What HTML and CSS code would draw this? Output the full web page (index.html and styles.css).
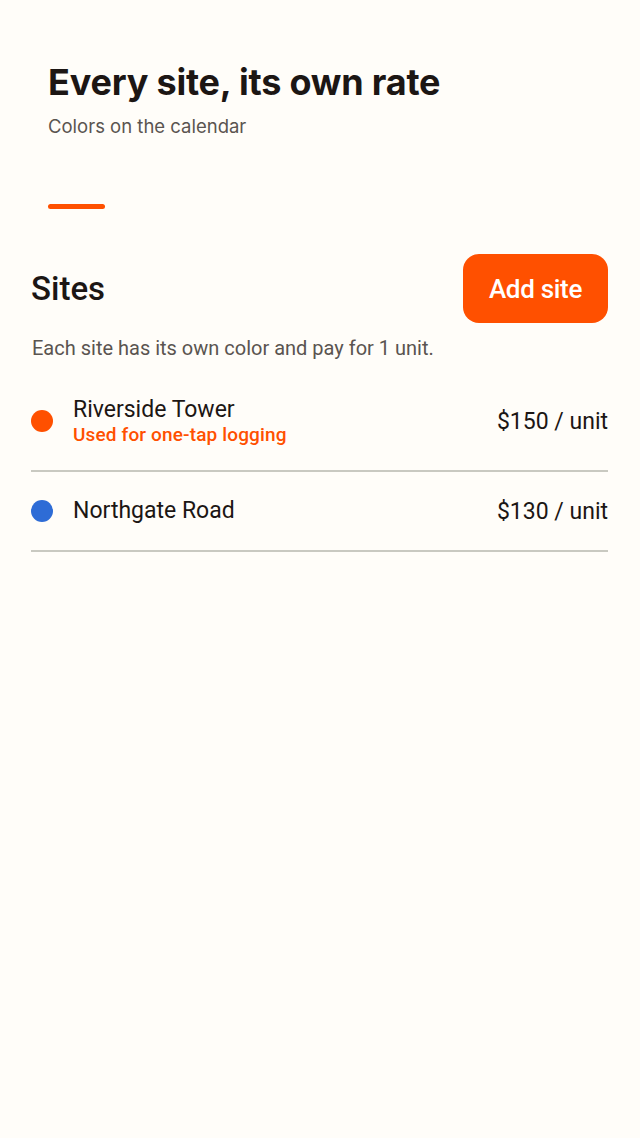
FILE: index.html
```html
<!DOCTYPE html>
<html lang="en">
<head>
    <meta charset="UTF-8">
    <title>Sites</title>
    <link rel="stylesheet" href="styles.css">
</head>
<body>
    <div class="header">
        <h1>Every site, its own rate</h1>
        <p class="subtitle">Colors on the calendar</p>
        <div class="accent"></div>
    </div>

    <div class="sites">
        <div class="sites-top">
            <h2>Sites</h2>
            <button class="add-btn">Add site</button>
        </div>
        <p class="hint">Each site has its own color and pay for 1 unit.</p>

        <ul class="site-list">
            <li class="site">
                <span class="dot orange"></span>
                <div class="site-info">
                    <div class="site-name">Riverside Tower</div>
                    <div class="site-note">Used for one-tap logging</div>
                </div>
                <div class="site-rate">$150 / unit</div>
            </li>
            <li class="site">
                <span class="dot blue"></span>
                <div class="site-info">
                    <div class="site-name">Northgate Road</div>
                </div>
                <div class="site-rate">$130 / unit</div>
            </li>
        </ul>
    </div>
</body>
</html>
```

FILE: styles.css
```css
body {
    margin: 0;
    background: #fffdf9;
    color: #1c1614;
    font-family: Roboto, "Liberation Sans", sans-serif;
}
.header {
    padding: 60px 48px 0 48px;
    font-family: Inter, "Liberation Sans", sans-serif;
}
h1 {
    margin: 0;
    font-size: 36px;
    font-weight: 700;
    letter-spacing: -0.2px;
    line-height: 44px;
}
.subtitle {
    margin: 10px 0 0 0;
    font-size: 18.5px;
    line-height: 24px;
    color: #5a5450;
}
.accent {
    width: 57px;
    height: 5px;
    margin-top: 66px;
    border-radius: 3px;
    background: #ff5000;
}
.sites {
    padding: 45px 32px 0 31px;
}
.sites-top {
    display: flex;
    justify-content: space-between;
    align-items: center;
}
h2 {
    margin: 0;
    font-size: 33px;
    font-weight: 500;
}
.add-btn {
    background: #ff5000;
    color: white;
    border: none;
    border-radius: 16px;
    width: 145px;
    height: 69px;
    font-family: Roboto, sans-serif;
    font-size: 26px;
    font-weight: 500;
    letter-spacing: -0.3px;
    cursor: pointer;
}
.hint {
    margin: 13px 0 0 1px;
    font-size: 20px;
    line-height: 24px;
    color: #5a5450;
}
.site-list {
    list-style: none;
    margin: 12px 0 0 0;
    padding: 0;
}
.site {
    display: flex;
    align-items: center;
    border-bottom: 2px solid #c9c9c1;
}
.site:first-child {
    height: 98px;
}
.site:nth-child(2) {
    height: 78px;
}
.dot {
    width: 22px;
    height: 22px;
    border-radius: 50%;
    margin-right: 20px;
    flex-shrink: 0;
}
.dot.orange {
    background: #ff5000;
}
.dot.blue {
    background: #2e6cd6;
}
.site-info {
    flex: 1;
}
.site-name {
    font-size: 23px;
    line-height: 28px;
}
.site-note {
    font-size: 19px;
    line-height: 22px;
    font-weight: 500;
    letter-spacing: 0.15px;
    color: #ff5000;
}
.site-rate {
    font-size: 23px;
}
```
